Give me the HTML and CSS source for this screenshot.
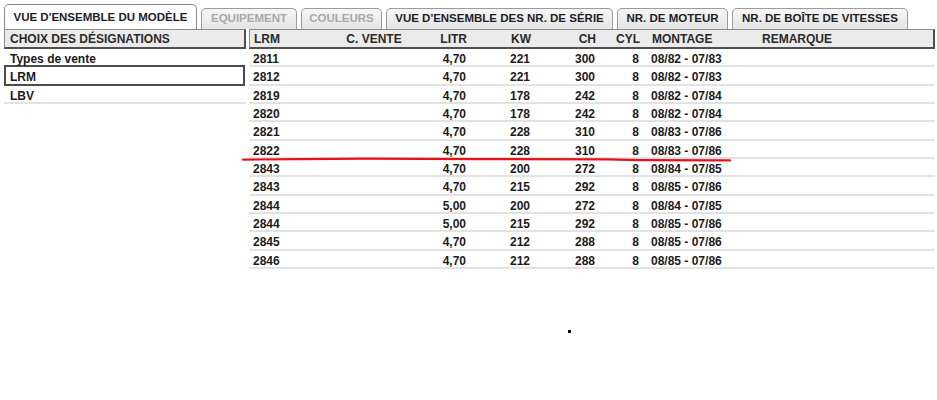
FILE: index.html
```html
<!DOCTYPE html>
<html lang="fr">
<head>
  <meta charset="UTF-8">
  <meta name="viewport" content="width=device-width, initial-scale=1.0">
  <title>Vue d'ensemble du modèle</title>
  <link rel="stylesheet" href="styles.css">
</head>
<body>

  <div class="page">
    <!-- Onglets -->
    <div class="tabs">
      <div class="tab active tab-1">VUE D'ENSEMBLE DU MODÈLE</div>
      <div class="tab disabled tab-2">EQUIPEMENT</div>
      <div class="tab disabled tab-3">COULEURS</div>
      <div class="tab tab-4">VUE D'ENSEMBLE DES NR. DE SÉRIE</div>
      <div class="tab tab-5">NR. DE MOTEUR</div>
      <div class="tab tab-6">NR. DE BOÎTE DE VITESSES</div>
    </div>

    <div class="panels">
      <!-- Choix des désignations -->
      <div class="side">
        <div class="head side-head">CHOIX DES DÉSIGNATIONS</div>
        <div class="side-item first">Types de vente</div>
        <div class="side-item selected">LRM</div>
        <div class="side-item">LBV</div>
      </div>

      <!-- Liste des modèles -->
      <div class="list">
        <div class="head row">
          <span>LRM</span>
          <span class="c">C. VENTE</span>
          <span class="r">LITR</span>
          <span class="r">KW</span>
          <span class="r">CH</span>
          <span class="r">CYL</span>
          <span class="l">MONTAGE</span>
          <span class="l">REMARQUE</span>
        </div>
        <div id="rows"></div>
      </div>
    </div>
  </div>

  <!-- Annotation rouge -->
  <svg class="mark" width="937" height="400" viewBox="0 0 937 400">
    <path d="M243 159.6 L300 159.2 L365 158.6 L480 159.1 L607 159.4 L640 160.2 L730 160.4" fill="none" stroke="#e8101a" stroke-width="2.2" stroke-linecap="round"/>
  </svg>
  <div class="dot"></div>

  <script>
    const models = [
      ['2811', '4,70', '221', '300', '8', '08/82 - 07/83'],
      ['2812', '4,70', '221', '300', '8', '08/82 - 07/83'],
      ['2819', '4,70', '178', '242', '8', '08/82 - 07/84'],
      ['2820', '4,70', '178', '242', '8', '08/82 - 07/84'],
      ['2821', '4,70', '228', '310', '8', '08/83 - 07/86'],
      ['2822', '4,70', '228', '310', '8', '08/83 - 07/86'],
      ['2843', '4,70', '200', '272', '8', '08/84 - 07/85'],
      ['2843', '4,70', '215', '292', '8', '08/85 - 07/86'],
      ['2844', '5,00', '200', '272', '8', '08/84 - 07/85'],
      ['2844', '5,00', '215', '292', '8', '08/85 - 07/86'],
      ['2845', '4,70', '212', '288', '8', '08/85 - 07/86'],
      ['2846', '4,70', '212', '288', '8', '08/85 - 07/86']
    ];

    const rows = document.getElementById('rows');
    models.forEach(m => {
      const row = document.createElement('div');
      row.className = 'row';
      row.innerHTML =
        `<span>${m[0]}</span><span></span>` +
        `<span class="r">${m[1]}</span><span class="r">${m[2]}</span>` +
        `<span class="r">${m[3]}</span><span class="r">${m[4]}</span>` +
        `<span class="l">${m[5]}</span><span></span>`;
      rows.appendChild(row);
    });
  </script>

</body>
</html>
```

FILE: styles.css
```css
body {
  margin: 0;
  background: #fff;
  font-family: "Liberation Sans", Arial, sans-serif;
  font-weight: bold;
  font-size: 12px;
  color: #1c1c1c;
}

.page {
  padding: 4px 2px 0 4px;
}

/* Tabs */
.tabs {
  display: flex;
  align-items: flex-end;
  gap: 4px;
  height: 25px;
}

.tab {
  box-sizing: border-box;
  height: 21px;
  line-height: 19px;
  text-align: center;
  font-size: 11.5px;
  color: #1e1e2a;
  background: linear-gradient(#f6f6f6, #e4e4e4);
  border: 1px solid #9c9c9c;
  border-bottom: none;
  border-radius: 5px 5px 0 0;
  white-space: nowrap;
}

.tab.active {
  height: 25px;
  line-height: 24px;
  background: #fff;
  border-color: #8a8a8a;
}

.tab.disabled {
  color: #a9a9a9;
}

.tab-1 { width: 193px; }
.tab-2 { width: 96px; }
.tab-3 { width: 81px; }
.tab-4 { width: 227px; }
.tab-5 { width: 111px; }
.tab-6 { width: 176px; }

/* Panels */
.panels {
  display: flex;
  gap: 3px;
}

.side {
  width: 242px;
}

.list {
  flex: 1;
}

/* Header bars */
.head {
  box-sizing: border-box;
  height: 20px;
  line-height: 19px;
  background: #ebebeb;
  color: #2a2a2a;
  border: 1px solid #8c8c8c;
  border-right: 2px solid #505050;
  border-bottom: 2px solid #505050;
}

.side-head {
  padding-left: 5px;
}

.side-item {
  box-sizing: border-box;
  height: 18.33px;
  line-height: 20px;
  padding-left: 6px;
  border-bottom: 2px solid #e2e2e2;
}

.side-item.first {
  border-bottom-color: transparent;
}

.side-item.selected {
  height: 20.33px;
  line-height: 20px;
  margin-top: -2px;
  padding-left: 4px;
  border: 2px solid #4c4c4c;
  width: 241px;
}

/* Rows */
.row {
  display: grid;
  grid-template-columns: 71px 106px 44px 64px 65px 44px 112px 1fr;
  box-sizing: border-box;
  height: 18.33px;
  line-height: 20px;
  border-bottom: 2px solid #e2e2e2;
}

.row.head {
  height: 20px;
  line-height: 19px;
  border-bottom: 2px solid #505050;
}

.row span {
  white-space: nowrap;
}

.row span:first-child {
  padding-left: 4px;
}

.row .c {
  text-align: center;
}

.row .r {
  text-align: right;
  padding-right: 4px;
}

.row .l {
  padding-left: 8px;
}

.row.head .l:last-child {
  padding-left: 6px;
}

/* Annotations */
.mark {
  position: absolute;
  top: 0;
  left: 0;
  pointer-events: none;
}

.dot {
  position: absolute;
  left: 568px;
  top: 330px;
  width: 3px;
  height: 3px;
  background: #000;
}
```
